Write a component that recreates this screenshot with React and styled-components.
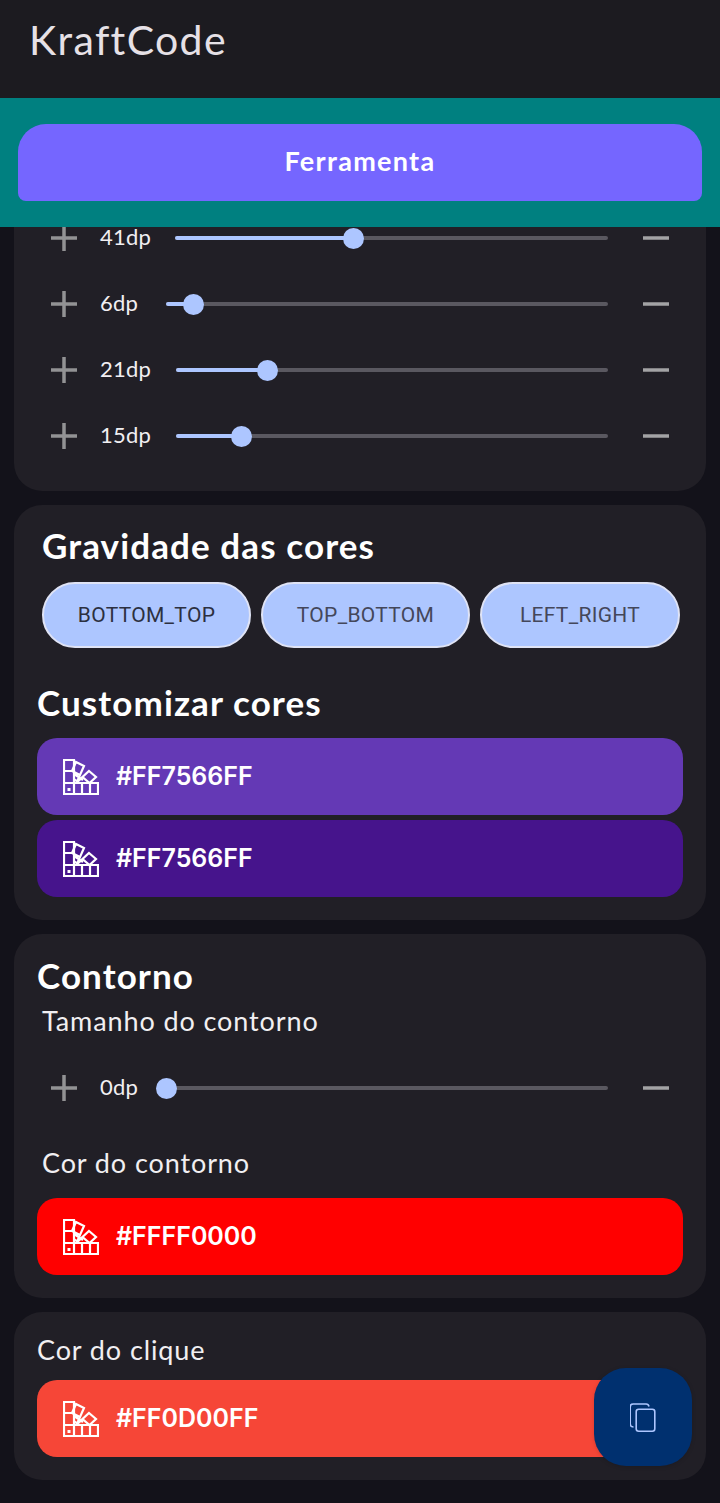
import React from "react";
import styled, { createGlobalStyle } from "styled-components";

const sliders = [
  { label: "41dp", value: 41, labelWidth: 75 },
  { label: "6dp", value: 6, labelWidth: 66 },
  { label: "21dp", value: 21, labelWidth: 76 },
  { label: "15dp", value: 15, labelWidth: 76 },
];

const PaletteIcon = () => (
  <svg width="36" height="36" viewBox="0 0 36 36" fill="none" stroke="#fff" strokeWidth="2.2">
    <path d="M1 1h10v34H1zM1 12h10M1 24h10M11 24h24v11H11zM19 24v11M27 24v11" />
    <rect x="4.5" y="29" width="3" height="3" fill="#fff" stroke="none" />
    <path d="M13 3l8 4-4 9-8-4zM17 16l-3.6 8M11 15l9 6M11 20l5 4" />
    <path d="M26 12l7 6-6.5 6-7-6zM20 18l-7 6" />
  </svg>
);

const CopyIcon = () => (
  <svg width="26" height="29" viewBox="1 0 26 29" fill="none" stroke="#adc6ff" strokeWidth="1.6">
    <rect x="7.2" y="6.2" width="18.6" height="22" rx="2.5" />
    <path d="M4.5 24C2.5 24 1.2 23 1.2 21V4c0-2 1.3-3 3-3h13c1.6 0 2.4 .8 2.8 2.5" />
  </svg>
);

const Plus = () => (
  <svg width="26" height="26" viewBox="0 0 26 26" stroke="#929294" strokeWidth="3.5">
    <path d="M0 13h26M13 0v26" />
  </svg>
);

const Minus = () => (
  <svg width="26" height="26" viewBox="0 0 26 26" stroke="#a3a3a5" strokeWidth="3.5">
    <path d="M0 13h26" />
  </svg>
);

const SliderRow = ({ label, value, labelWidth }) => (
  <Row>
    <Plus />
    <DpLabel $width={labelWidth}>{label}</DpLabel>
    <Track>
      <TrackFill style={{ width: `${value}%` }} />
      <Thumb style={{ left: `${value}%` }} />
    </Track>
    <Minus />
  </Row>
);

const ColorButton = ({ color, children }) => (
  <ColorBar $color={color}>
    <PaletteIcon />
    <HexText>{children}</HexText>
  </ColorBar>
);

const App = () => {
  return (
    <Page>
      <GlobalStyle />
      <Stick>
        <Header>
          <Brand>KraftCode</Brand>
        </Header>
        <ToolBand>
          <ToolButton>Ferramenta</ToolButton>
        </ToolBand>
      </Stick>

      <ScrolledPanel>
        {sliders.map((s) => (
          <SliderRow key={s.label} {...s} />
        ))}
      </ScrolledPanel>

      <Panel>
        <SectionTitle $indent={5} $mt={23}>Gravidade das cores</SectionTitle>
        <Chips>
          <Chip $width={209} $dark>BOTTOM_TOP</Chip>
          <Chip $width={209}>TOP_BOTTOM</Chip>
          <Chip $width={200}>LEFT_RIGHT</Chip>
        </Chips>
        <SectionTitle $mt={37}>Customizar cores</SectionTitle>
        <Bars>
          <ColorButton color="#6439b5">#FF7566FF</ColorButton>
          <ColorButton color="#46148c">#FF7566FF</ColorButton>
        </Bars>
      </Panel>

      <Panel>
        <SectionTitle $mt={24}>Contorno</SectionTitle>
        <SubTitle $mt={8}>Tamanho do contorno</SubTitle>
        <Row $mt={17}>
          <Plus />
          <DpLabel $width={66}>0dp</DpLabel>
          <Track>
            <Thumb style={{ left: "0%" }} />
          </Track>
          <Minus />
        </Row>
        <SubTitle $mt={25}>Cor do contorno</SubTitle>
        <Bars $mt={18}>
          <ColorButton color="#ff0000">#FFFF0000</ColorButton>
        </Bars>
      </Panel>

      <Panel>
        <SubTitle $mt={21} $flush>Cor do clique</SubTitle>
        <Bars $mt={13}>
          <ColorButton color="#f64637">#FF0D00FF</ColorButton>
        </Bars>
        <Fab>
          <CopyIcon />
        </Fab>
      </Panel>
    </Page>
  );
};

export default App;

const GlobalStyle = createGlobalStyle`
  html, body {
    margin: 0;
    padding: 0;
    background: #13121a;
  }
  * {
    box-sizing: border-box;
  }
`;

const Page = styled.div`
  width: 720px;
  height: 1503px;
  overflow: hidden;
  background: #13121a;
  font-family: "Lato", "Noto Sans", sans-serif;
  color: #fff;
`;

const Stick = styled.div`
  position: relative;
  z-index: 2;
`;

const Header = styled.header`
  height: 98px;
  background: #1c1b20;
  padding: 15px 0 0 29px;
`;

const Brand = styled.h1`
  margin: 0;
  font-size: 41px;
  line-height: 50px;
  font-weight: 400;
  color: #e6e1e6;
  letter-spacing: 1.35px;
`;

const ToolBand = styled.div`
  height: 129px;
  background: #008080;
  padding: 26px 18px;
`;

const ToolButton = styled.button`
  display: block;
  width: 100%;
  height: 77px;
  padding: 0 0 4px;
  border: 0;
  border-radius: 28px 28px 8px 8px;
  background: #7566ff;
  color: #fff;
  font-family: inherit;
  font-size: 27px;
  font-weight: 700;
  letter-spacing: 1.3px;
`;

const Panel = styled.section`
  position: relative;
  display: flow-root;
  margin: 14px 14px 0;
  padding: 0 23px 23px;
  background: #211f26;
  border-radius: 28px;
`;

const ScrolledPanel = styled(Panel)`
  margin-top: -100px;
  padding: 78px 23px 22px;
`;

const Row = styled.div`
  display: flex;
  align-items: center;
  height: 66px;
  margin-top: ${(p) => p.$mt || 0}px;
  padding: 0 14px;
`;

const DpLabel = styled.span`
  flex: none;
  width: ${(p) => p.$width}px;
  margin-left: 23px;
  padding-bottom: 3px;
  font-size: 22px;
  letter-spacing: 0.2px;
  color: #f1eff2;
`;

const Track = styled.div`
  position: relative;
  flex: 1;
  height: 4px;
  margin-right: 35px;
  border-radius: 2px;
  background: #5a5860;
`;

const TrackFill = styled.div`
  height: 100%;
  border-radius: 2px;
  background: #adc6ff;
`;

const Thumb = styled.div`
  position: absolute;
  top: 50%;
  width: 21px;
  height: 21px;
  margin: -10.5px 0 0 -10px;
  border-radius: 50%;
  background: #adc6ff;
`;

const SectionTitle = styled.h2`
  margin: ${(p) => p.$mt || 0}px 0 0 ${(p) => p.$indent || 0}px;
  padding-bottom: 4px;
  font-size: 35px;
  line-height: 34px;
  font-weight: 700;
  color: #fff;
  letter-spacing: 1.1px;
`;

const SubTitle = styled.h3`
  margin: ${(p) => p.$mt || 0}px 0 0 ${(p) => (p.$flush ? 0 : 5)}px;
  font-size: 27px;
  line-height: 34px;
  font-weight: 400;
  color: #f1eff2;
  letter-spacing: 0.9px;
`;

const Chips = styled.div`
  display: flex;
  gap: 10px;
  margin: 16px 0 0 5px;
`;

const Chip = styled.button`
  flex: none;
  width: ${(p) => p.$width}px;
  height: 66px;
  padding: 0;
  border: 2px solid #dfe3f5;
  border-radius: 33px;
  background: #adc6ff;
  color: ${(p) => (p.$dark ? "#2c3040" : "#44475a")};
  font-family: "Roboto", sans-serif;
  font-size: 21px;
  font-weight: 400;
  letter-spacing: 0.3px;
`;

const Bars = styled.div`
  display: flex;
  flex-direction: column;
  gap: 5px;
  margin-top: ${(p) => p.$mt || 15}px;
`;

const ColorBar = styled.div`
  display: flex;
  align-items: center;
  gap: 17px;
  height: 77px;
  padding-left: 26px;
  border-radius: 20px;
  background: ${(p) => p.$color};
`;

const HexText = styled.span`
  padding-bottom: 2px;
  font-family: "Inter", sans-serif;
  font-size: 25px;
  font-weight: 600;
  color: #fff;
`;

const Fab = styled.button`
  position: absolute;
  right: 14px;
  bottom: 14px;
  display: flex;
  align-items: center;
  justify-content: center;
  width: 98px;
  height: 98px;
  padding: 0;
  border: 0;
  border-radius: 32px;
  background: #00306f;
  box-shadow: 0 1px 4px rgba(0, 0, 0, 0.15);
`;
